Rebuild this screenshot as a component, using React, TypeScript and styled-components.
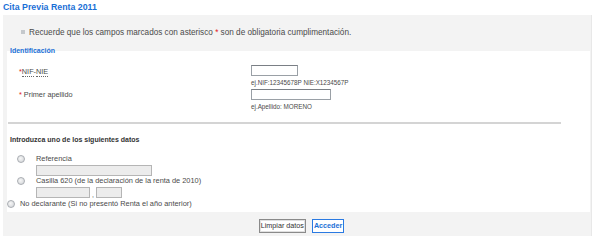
import React from "react";
import styled, { createGlobalStyle } from "styled-components";

const Global = createGlobalStyle`
  html, body { margin: 0; padding: 0; background: #fff; }
  body { font-family: "Liberation Sans", Arial, sans-serif; color: #333; }
  * { box-sizing: border-box; }
`;

const Page = styled.div`
  width: 600px;
  height: 242px;
  padding: 1px 0 0 3px;
`;

const Title = styled.h1`
  margin: 0;
  height: 14px;
  font-size: 8.8px;
  line-height: 12px;
  font-weight: bold;
  color: #1a6fd6;
`;

const Panel = styled.div`
  width: 589px;
  height: 221px;
  background: #f3f3f3;
  border-right: 1px solid #e8e8e8;
  padding: 10px 1px 0 4px;
  display: flex;
  flex-direction: column;
`;

const Notice = styled.p`
  margin: 0 0 0 14px;
  height: 14px;
  display: flex;
  align-items: center;
  gap: 4px;
  font-size: 8.2px;
  color: #4a4a4a;
`;

const Bullet = styled.span`
  width: 4px;
  height: 4px;
  background: #c4c8cc;
`;

const Star = styled.span`
  color: #e21b1b;
`;

const Fieldset = styled.fieldset`
  margin: 8px 0 0 0;
  padding: 0;
  border: 0;
  background: #fff;
  min-width: 0;
  height: 165px;
`;

const Legend = styled.legend`
  padding: 0 0 0 3px;
  font-size: 7px;
  font-weight: bold;
  color: #1a6fd6;
  line-height: 8px;
`;

const Fields = styled.div`
  padding: 10px 0 0 12px;
  display: flex;
  flex-direction: column;
  gap: 2px;
`;

const FieldRow = styled.div`
  display: grid;
  grid-template-columns: 232px auto;
  align-items: start;
`;

const Label = styled.label<{ $offset: number }>`
  font-size: 7.3px;
  color: #4a4a4a;
  padding-top: ${(p) => p.$offset}px;
`;

const Abbr = styled.abbr`
  text-decoration: none;
  border-bottom: 1px dotted #666;
`;

const InputCol = styled.div`
  display: flex;
  flex-direction: column;
  gap: 2px;
`;

const TextInput = styled.div<{ $w: number }>`
  width: ${(p) => p.$w}px;
  height: 11px;
  border: 1px solid #9aa0a6;
  border-top-color: #7a7f85;
  background: #fff;
`;

const Hint = styled.span`
  font-size: 6.3px;
  color: #4a4a4a;
  line-height: 9px;
`;

const Rule = styled.hr`
  margin: 11px 0 0 1px;
  width: 553px;
  height: 2px;
  border: 0;
  background: #d4d4d4;
`;

const SubHead = styled.h2`
  margin: 11px 0 0 3px;
  font-size: 7px;
  font-weight: bold;
  color: #333;
  line-height: 9px;
`;

const Options = styled.div`
  margin-top: 10px;
  display: flex;
  flex-direction: column;
`;

const Option = styled.div<{ $indent: number }>`
  display: grid;
  grid-template-columns: ${(p) => p.$indent}px auto;
  align-items: start;
`;

const Radio = styled.span<{ $ml: number }>`
  display: block;
  margin: 1px 0 0 ${(p) => p.$ml}px;
  width: 8px;
  height: 8px;
  border-radius: 50%;
  border: 1px solid #a9adb2;
  background: radial-gradient(circle at 40% 40%, #f6f6f6, #cfd2d6);
`;

const OptionBody = styled.div`
  display: flex;
  flex-direction: column;
  gap: 1px;
`;

const OptionText = styled.span`
  font-size: 7.4px;
  color: #4a4a4a;
  line-height: 10px;
`;

const DisabledInput = styled.div<{ $w: number }>`
  width: ${(p) => p.$w}px;
  height: 11px;
  border: 1px solid #b5b5b5;
  background: #ececec;
`;

const InputPair = styled.div`
  display: flex;
  align-items: flex-end;
  gap: 2px;
  font-size: 7px;
  color: #555;
  margin-bottom: 1px;
`;

const Buttons = styled.div`
  margin-top: 7px;
  display: flex;
  justify-content: center;
  gap: 6px;
  padding-left: 6px;
`;

const Button = styled.button<{ $primary?: boolean }>`
  font-family: "Liberation Sans", Arial, sans-serif;
  font-size: 7.2px;
  height: 14px;
  padding: 0 1px;
  line-height: 10px;
  background: #fff;
  color: ${(p) => (p.$primary ? "#1a6fd6" : "#333")};
  font-weight: ${(p) => (p.$primary ? "bold" : "normal")};
  border: 1px solid ${(p) => (p.$primary ? "#2a7ae2" : "#8a8a8a")};
  box-shadow: inset 0 0 0 1px ${(p) => (p.$primary ? "#ffffff" : "#e0e0e0")};
  border-radius: 0;
`;

export default function App() {
  return (
    <Page>
      <Global />
      <Title>Cita Previa Renta 2011</Title>
      <Panel>
        <Notice>
          <Bullet />
          <span>
            Recuerde que los campos marcados con asterisco <Star>*</Star> son de obligatoria cumplimentación.
          </span>
        </Notice>
        <Fieldset>
          <Legend>Identificación</Legend>
          <Fields>
            <FieldRow>
              <Label $offset={2}>
                <Star>*</Star>
                <Abbr>NIF</Abbr>-<Abbr>NIE</Abbr>
              </Label>
              <InputCol>
                <TextInput $w={47} />
                <Hint>ej.NIF:12345678P NIE:X1234567P</Hint>
              </InputCol>
            </FieldRow>
            <FieldRow>
              <Label $offset={1}>
                <Star>*</Star> Primer apellido
              </Label>
              <InputCol>
                <TextInput $w={80} />
                <Hint>ej.Apellido: MORENO</Hint>
              </InputCol>
            </FieldRow>
          </Fields>
          <Rule />
          <SubHead>Introduzca uno de los siguientes datos</SubHead>
          <Options>
            <Option $indent={29}>
              <Radio $ml={10} />
              <OptionBody>
                <OptionText>Referencia</OptionText>
                <DisabledInput $w={116} />
              </OptionBody>
            </Option>
            <Option $indent={29}>
              <Radio $ml={10} />
              <OptionBody>
                <OptionText>Casilla 620 (de la declaración de la renta de 2010)</OptionText>
                <InputPair>
                  <DisabledInput $w={54} />
                  <span>,</span>
                  <DisabledInput $w={26} />
                </InputPair>
              </OptionBody>
            </Option>
            <Option $indent={13}>
              <Radio $ml={0} />
              <OptionText>No declarante (Si no presentó Renta el año anterior)</OptionText>
            </Option>
          </Options>
        </Fieldset>
        <Buttons>
          <Button>Limpiar datos</Button>
          <Button $primary>Acceder</Button>
        </Buttons>
      </Panel>
    </Page>
  );
}
